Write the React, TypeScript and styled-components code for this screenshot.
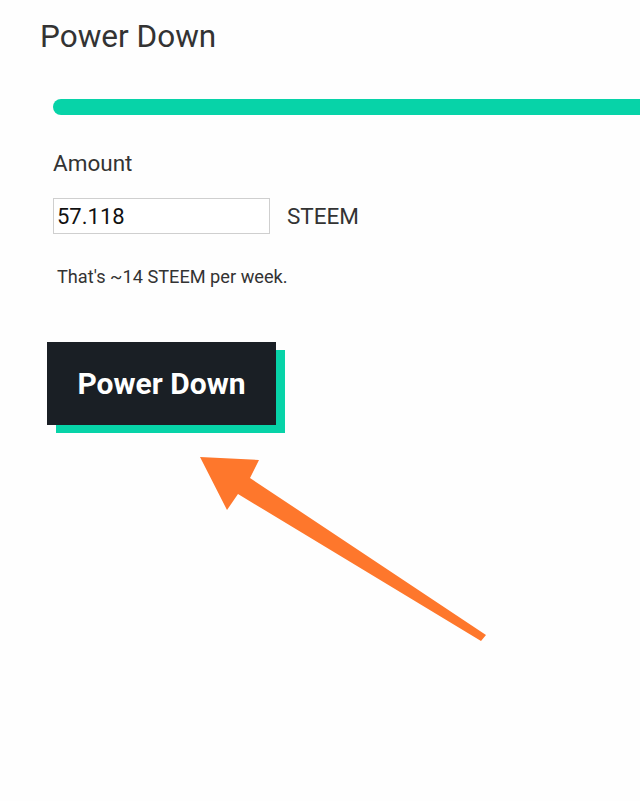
import React from "react";
import styled, { createGlobalStyle } from "styled-components";

const GlobalStyle = createGlobalStyle`
  html, body {
    margin: 0;
    padding: 0;
    background: #fefefe;
    overflow: hidden;
  }
  body {
    font-family: Roboto, "Liberation Sans", sans-serif;
    color: #333;
  }
`;

const Page = styled.div`
  position: relative;
  width: 640px;
  height: 801px;
  padding-top: 19px;
  box-sizing: border-box;
  overflow: hidden;
`;

const Title = styled.h1`
  margin: 0 0 0 40px;
  font-size: 31.5px;
  line-height: 36px;
  font-weight: 400;
  color: #333;
`;

const Form = styled.div`
  display: flex;
  flex-direction: column;
  align-items: flex-start;
  padding-left: 53px;
`;

const Progress = styled.div`
  margin-top: 44px;
  width: 620px;
  height: 16px;
  border-radius: 8px 0 0 8px;
  background: #07d3a8;
`;

const Label = styled.label`
  margin-top: 35px;
  font-size: 22.5px;
  line-height: 26px;
  color: #333;
`;

const InputRow = styled.div`
  display: flex;
  align-items: center;
  gap: 17px;
  margin-top: 22px;
`;

const AmountInput = styled.input`
  box-sizing: border-box;
  width: 217px;
  height: 36px;
  padding: 0 3px;
  border: 1px solid #cfcfcf;
  background: #fff;
  font-family: Roboto, "Liberation Sans", sans-serif;
  font-size: 22px;
  color: #111;
  outline: none;
`;

const Unit = styled.span`
  font-size: 22.5px;
  color: #333;
`;

const Hint = styled.p`
  margin: 33px 0 0 4px;
  font-size: 18.2px;
  line-height: 20px;
  color: #333;
`;

const ActionButton = styled.button`
  margin: 55px 0 0 -6px;
  width: 229px;
  height: 83px;
  border: none;
  background: #1a1f25;
  box-shadow: 9px 8px 0 #07d3a8;
  color: #fff;
  font-family: Roboto, "Liberation Sans", sans-serif;
  font-size: 30px;
  font-weight: 700;
  cursor: pointer;
`;

const Pointer = styled.svg`
  position: absolute;
  left: 0;
  top: 0;
  pointer-events: none;
`;

export default function App() {
  return (
    <>
      <GlobalStyle />
      <Page>
        <Title>Power Down</Title>
        <Form>
          <Progress />
          <Label htmlFor="amount">Amount</Label>
          <InputRow>
            <AmountInput id="amount" defaultValue="57.118" />
            <Unit>STEEM</Unit>
          </InputRow>
          <Hint>That's ~14 STEEM per week.</Hint>
          <ActionButton>Power Down</ActionButton>
        </Form>
        <Pointer width="640" height="801" viewBox="0 0 640 801">
          <polygon
            points="200,457 259,460 250,478 486,635 481,641 238,494 227,510"
            fill="#fe772c"
          />
        </Pointer>
      </Page>
    </>
  );
}
